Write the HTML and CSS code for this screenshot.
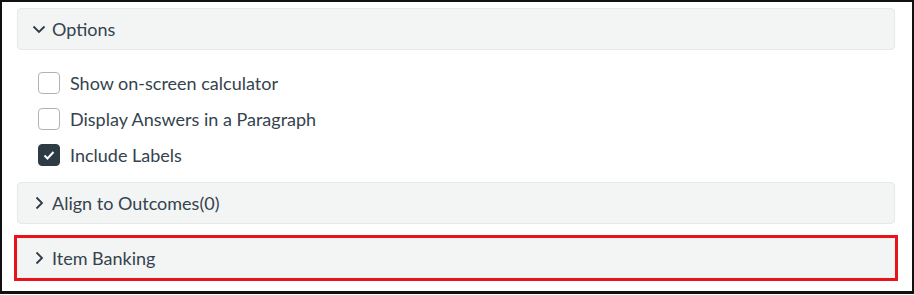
FILE: index.html
```html
<!DOCTYPE html>
<html>
<head>
<meta charset="utf-8">
<link rel="stylesheet" href="styles.css">
</head>
<body>
<div class="frame">
  <div class="panel">
    <svg class="chev" viewBox="0 0 14 14" width="14" height="14"><path d="M1.5 4.5 L7 10 L12.5 4.5" fill="none" stroke="#2d3b45" stroke-width="1.8"/></svg>
    <span>Options</span>
  </div>
  <div class="options">
    <label class="row"><span class="box"></span><span>Show on-screen calculator</span></label>
    <label class="row"><span class="box"></span><span>Display Answers in a Paragraph</span></label>
    <label class="row"><span class="box checked"><svg viewBox="0 0 20 20" width="20" height="20"><path d="M5.5 10.5 L8.5 13.5 L14.5 7" fill="none" stroke="#fff" stroke-width="2"/></svg></span><span>Include Labels</span></label>
  </div>
  <div class="panel">
    <svg class="chev" viewBox="0 0 14 14" width="14" height="14"><path d="M4.5 1.5 L10 7 L4.5 12.5" fill="none" stroke="#2d3b45" stroke-width="1.8"/></svg>
    <span>Align to Outcomes(0)</span>
  </div>
  <div class="highlight">
    <div class="panel inner">
      <svg class="chev" viewBox="0 0 14 14" width="14" height="14"><path d="M4.5 1.5 L10 7 L4.5 12.5" fill="none" stroke="#2d3b45" stroke-width="1.8"/></svg>
      <span>Item Banking</span>
    </div>
  </div>
</div>
</body>
</html>
```
FILE: styles.css
```css
html, body { margin: 0; padding: 0; background: #fff; }
.frame {
  box-sizing: border-box;
  width: 914px;
  height: 294px;
  border: 2px solid #111;
  border-bottom-width: 3px;
  padding: 6px 17px 0 15px;
  font-family: Lato, "Noto Sans", sans-serif;
  font-size: 18px;
  color: #34434e;
}
.panel {
  box-sizing: border-box;
  height: 42px;
  background: #f3f4f4;
  border: 1px solid #e6e8e9;
  border-radius: 4px;
  display: flex;
  align-items: center;
  padding-left: 14px;
  gap: 6px;
}
.chev { flex: none; }
.options {
  display: flex;
  flex-direction: column;
  gap: 16px;
  padding: 23px 0 17px 21px;
}
.row { display: flex; align-items: center; gap: 10px; height: 20px; }
.box {
  box-sizing: border-box;
  width: 22px; height: 22px;
  border: 1px solid #aeb5ba;
  border-radius: 4px;
  background: #fff;
  display: flex; align-items: center; justify-content: center;
}
.box.checked { background: #2d3b45; border-color: #2d3b45; }
.box svg { display: block; }
.highlight {
  margin: 11px -3px 0 -3px;
  border: 3px solid #e8141c;
  height: 46px;
  box-sizing: border-box;
}
.highlight .inner { height: 40px; border-radius: 0; border-color: #eceeef; }
```
